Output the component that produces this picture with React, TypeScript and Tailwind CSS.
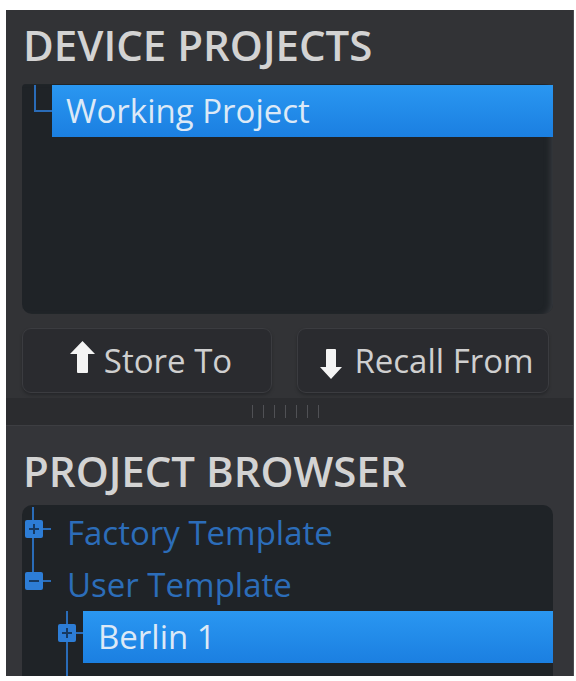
import React from 'react';

type TreeRow = {
  label: string;
  depth: number;
  kind: 'plus' | 'minus';
  selected?: boolean;
  lineEnd?: boolean;
};

const rows: TreeRow[] = [
  { label: 'Factory Template', depth: 0, kind: 'plus' },
  { label: 'User Template', depth: 0, kind: 'minus', lineEnd: true },
  { label: 'Berlin 1', depth: 1, kind: 'plus', selected: true },
  { label: 'Berlin 2', depth: 1, kind: 'plus' },
];

const ArrowUp = () => (
  <svg width="25" height="32" viewBox="0 0 25 32" className="mb-[8px] shrink-0">
    <path d="M12.5 0 L25 13 L18 13 L18 31 Q18 32 17 32 L8 32 Q7 32 7 31 L7 13 L0 13 Z" fill="#f4f4f4" />
  </svg>
);

const ArrowDown = () => (
  <svg width="22" height="30" viewBox="0 0 22 30" className="mt-[6px] shrink-0">
    <path d="M11 30 L22 18 L16 18 L16 1 Q16 0 15 0 L7 0 Q6 0 6 1 L6 18 L0 18 Z" fill="#f4f4f4" />
  </svg>
);

const Expander: React.FC<{ kind: 'plus' | 'minus'; x: number }> = ({ kind, x }) => (
  <g>
    <rect x={x} y={13} width={18} height={18} rx={2} fill="#2d7dd6" />
    <line x1={x + 4} y1={22} x2={x + 14} y2={22} stroke="#173a62" strokeWidth={2} />
    {kind === 'plus' && <line x1={x + 9} y1={17} x2={x + 9} y2={27} stroke="#173a62" strokeWidth={2} />}
    <line x1={x + 18} y1={22} x2={x + 26} y2={22} stroke="#2a6cb8" strokeWidth={2} />
  </g>
);

const Row: React.FC<{ row: TreeRow }> = ({ row }) => {
  const gutter = row.depth === 0 ? 45 : 61;
  const lineX = row.depth === 0 ? 11 : 45;
  const boxX = row.depth === 0 ? 3 : 36;
  return (
    <div className="flex h-[52px] shrink-0 items-stretch">
      <svg width={gutter} height={52} viewBox={`0 0 ${gutter} 52`} className="shrink-0">
        <line x1={lineX} y1={0} x2={lineX} y2={row.lineEnd ? 22 : 52} stroke="#2a6cb8" strokeWidth={2} />
        <Expander kind={row.kind} x={boxX} />
      </svg>
      {row.selected ? (
        <div className="flex flex-1 items-center bg-gradient-to-b from-[#2a97f1] to-[#1b7fe1] pl-[15px] text-[33px] text-[#dce9f7]">
          {row.label}
        </div>
      ) : (
        <div className="flex flex-1 items-center text-[33px] text-[#2c6db9]">{row.label}</div>
      )}
    </div>
  );
};

export default function App() {
  return (
    <div className="min-h-screen bg-white pl-[6px] pt-[10px] font-['Open_Sans',sans-serif]">
      <div className="flex h-[666px] w-[567px] flex-col overflow-hidden bg-[#323336] shadow-[1px_0_0_#4a4b4f]">
        {/* device projects */}
        <section className="flex shrink-0 flex-col pl-[16px] pr-[20px] pt-[14px]">
          <h2 className="pl-px text-[42px] font-semibold leading-[42px] text-[#d3d3d3]">DEVICE PROJECTS</h2>
          <div className="relative mt-[18px] flex h-[230px] rounded-b-[10px] rounded-t-[4px] bg-[#1f2327] pt-px shadow-[inset_-6px_0_6px_-4px_#3a3d42]">
            <svg width="30" height="52" viewBox="0 0 30 52" className="shrink-0">
              <path d="M13 0 L13 26 L30 26" fill="none" stroke="#2a6cb8" strokeWidth={2} />
            </svg>
            <div className="flex h-[52px] flex-1 items-center bg-gradient-to-b from-[#2a97f1] to-[#1b7fe1] pl-[14px] text-[33px] text-[#dce9f7]">
              Working Project
            </div>
          </div>
          <div className="mt-[14px] flex text-[33px] text-[#cfcfcf]">
            <button className="flex h-[65px] w-[250px] items-center justify-center gap-[9px] rounded-[9px] border border-[#3b3c40] bg-[#2a2b2f] pl-[8px] shadow-[0_2px_3px_#26272a]">
              <ArrowUp />
              <span>Store To</span>
            </button>
            <button className="ml-[25px] flex h-[65px] w-[252px] items-center justify-center gap-[12px] rounded-[9px] border border-[#3b3c40] bg-[#2a2b2f] pl-[8px] shadow-[0_2px_3px_#26272a]">
              <ArrowDown />
              <span>Recall From</span>
            </button>
          </div>
        </section>

        {/* splitter */}
        <div className="mt-[5px] flex h-[27px] shrink-0 items-center justify-center gap-[10px] bg-[#2b2c2f] pr-[9px]">
          {Array.from({ length: 7 }).map((_, i) => (
            <span key={i} className="h-[13px] w-px bg-[#505155]" />
          ))}
        </div>

        {/* project browser */}
        <section className="flex min-h-0 flex-1 flex-col border-t border-[#3d3e42] bg-[#343539] pl-[16px] pr-[20px] pt-[24px]">
          <h2 className="shrink-0 pl-px text-[42px] font-semibold leading-[42px] text-[#d3d3d3]">PROJECT BROWSER</h2>
          <div className="mt-[13px] flex min-h-0 flex-1 flex-col overflow-hidden rounded-t-[10px] bg-[#1f2327] pt-[2px]">
            {rows.map((row) => (
              <Row key={row.label} row={row} />
            ))}
          </div>
        </section>
      </div>
    </div>
  );
}
